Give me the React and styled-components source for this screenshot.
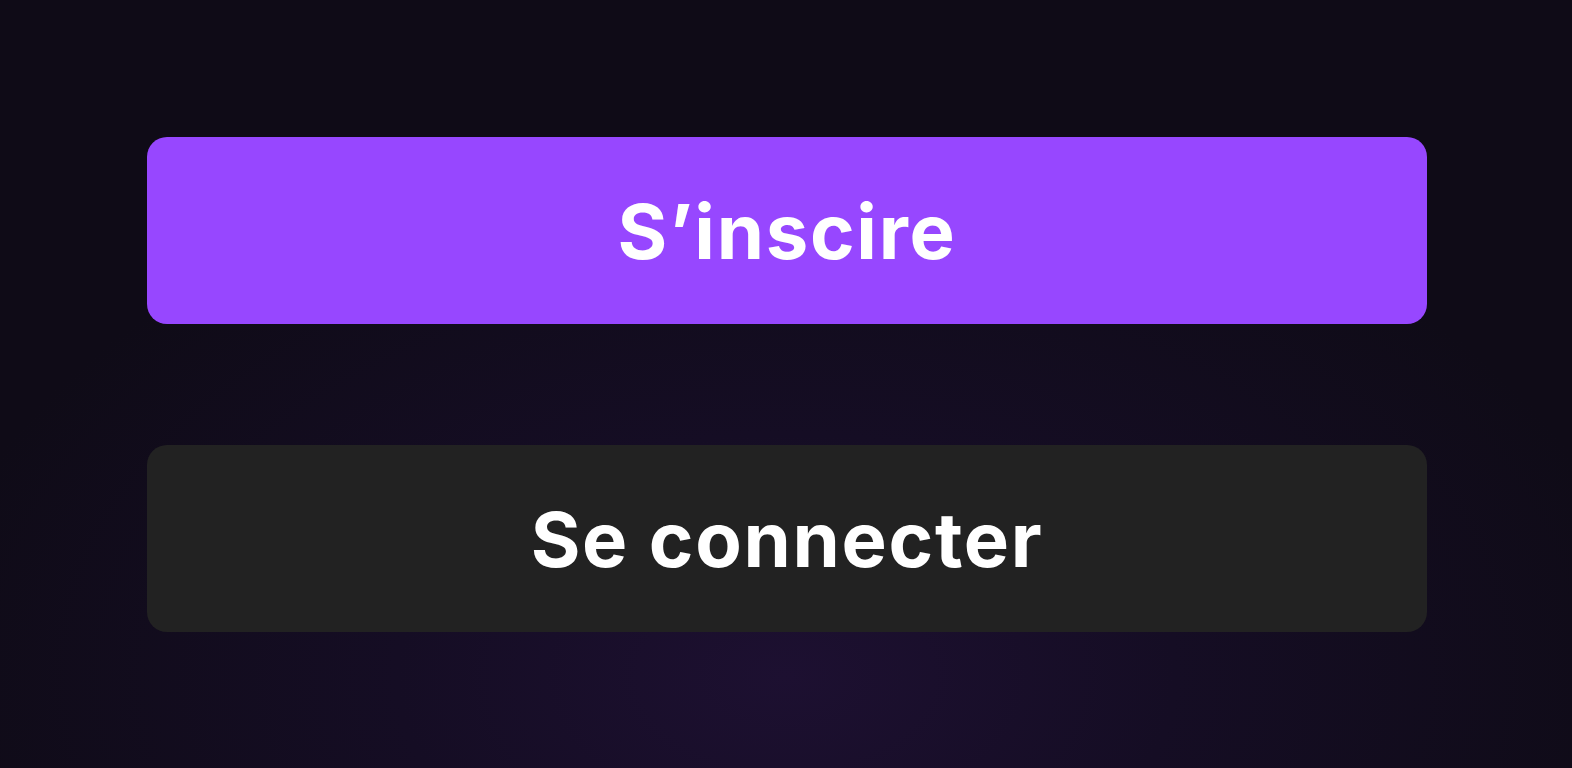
import styled, { createGlobalStyle } from 'styled-components'

const GlobalStyle = createGlobalStyle`
  html, body {
    margin: 0;
    padding: 0;
    height: 100%;
  }

  body {
    background: #0f0b17;
    font-family: Inter, 'Noto Sans', sans-serif;
  }

  #root {
    height: 100%;
  }
`

const Screen = styled.main`
  box-sizing: border-box;
  width: 100%;
  height: 768px;
  display: flex;
  flex-direction: column;
  align-items: center;
  justify-content: center;
  gap: 121px;
  padding-left: 2px;
  background:
    radial-gradient(ellipse 55% 70% at 50% 88%, #1d1031 0%, #150d24 45%, rgba(15, 11, 23, 0) 100%),
    #0f0b17;
`

const ActionButton = styled.button`
  box-sizing: border-box;
  width: 1280px;
  height: 187px;
  border: none;
  border-radius: 20px;
  background: ${({ $variant }) => ($variant === 'primary' ? '#9747ff' : '#222222')};
  color: #ffffff;
  font-family: Inter, 'Noto Sans', sans-serif;
  font-size: 76px;
  font-weight: 700;
  letter-spacing: 1.7px;
  padding-top: 2px;
  cursor: pointer;
`

export default function App() {
  return (
    <>
      <GlobalStyle />
      <Screen>
        <ActionButton $variant="primary">S’inscire</ActionButton>
        <ActionButton $variant="secondary">Se connecter</ActionButton>
      </Screen>
    </>
  )
}
